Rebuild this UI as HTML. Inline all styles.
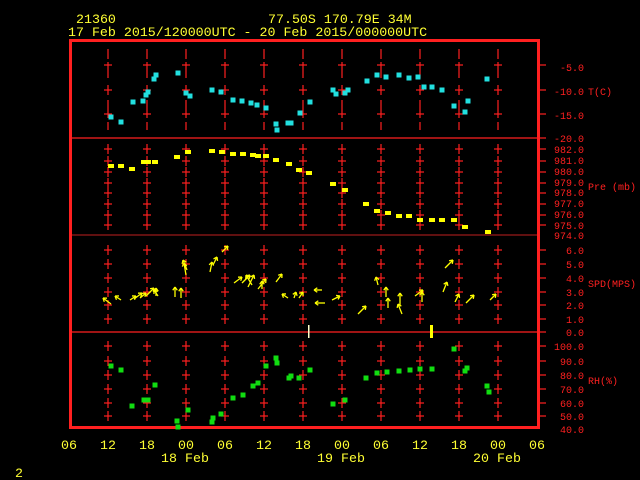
<!DOCTYPE html>
<html><head><meta charset="utf-8"><style>
html,body{margin:0;padding:0;background:#000;width:640px;height:480px;overflow:hidden}
svg{display:block}
text{font-family:"Liberation Mono",monospace}
</style></head><body>
<svg id="s" width="640" height="480" xmlns="http://www.w3.org/2000/svg">
<g fill="#ffff33" font-size="13.3">
<text x="76" y="23">21360</text>
<text x="268" y="23">77.50S  170.79E   34M</text>
<text x="68" y="36">17 Feb 2015/120000UTC - 20 Feb 2015/000000UTC</text>
<text x="185" y="462" text-anchor="middle">18 Feb</text>
<text x="341" y="462" text-anchor="middle">19 Feb</text>
<text x="497" y="462" text-anchor="middle">20 Feb</text>
<text x="15" y="477">2</text>
</g>
<g fill="#ffff33" font-size="13.3" text-anchor="middle">
<text x="69" y="449">06</text><text x="108" y="449">12</text><text x="147" y="449">18</text><text x="186" y="449">00</text><text x="225" y="449">06</text><text x="264" y="449">12</text><text x="303" y="449">18</text><text x="342" y="449">00</text><text x="381" y="449">06</text><text x="420" y="449">12</text><text x="459" y="449">18</text><text x="498" y="449">00</text><text x="537" y="449">06</text>
</g>
<g fill="#ff2020" font-size="10" text-anchor="end">
<text x="584" y="71">-5.0</text><text x="584" y="95">-10.0</text><text x="584" y="119">-15.0</text><text x="584" y="142">-20.0</text>
<text x="584" y="153">982.0</text><text x="584" y="164">981.0</text><text x="584" y="175">980.0</text><text x="584" y="186">979.0</text><text x="584" y="196">978.0</text><text x="584" y="207">977.0</text><text x="584" y="218">976.0</text><text x="584" y="229">975.0</text><text x="584" y="239">974.0</text>
<text x="584" y="254">6.0</text><text x="584" y="268">5.0</text><text x="584" y="282">4.0</text><text x="584" y="296">3.0</text><text x="584" y="309">2.0</text><text x="584" y="323">1.0</text><text x="584" y="336">0.0</text>
<text x="584" y="350">100.0</text><text x="584" y="365">90.0</text><text x="584" y="379">80.0</text><text x="584" y="393">70.0</text><text x="584" y="407">60.0</text><text x="584" y="420">50.0</text><text x="584" y="433">40.0</text>
</g>
<g fill="#ff2020" font-size="10">
<text x="588" y="95">T(C)</text><text x="588" y="190">Pre (mb)</text><text x="588" y="287">SPD(MPS)</text><text x="588" y="384">RH(%)</text>
</g>
<g id="g"></g>
</svg>
<script>
var g=document.getElementById('g'),h='';
function L(a,b,c,d,col,w){h+='<line x1="'+a+'" y1="'+b+'" x2="'+c+'" y2="'+d+'" stroke="'+(col||'#ff2020')+'" stroke-width="'+(w||1.2)+'"/>';}
var xs=[108,147,186,225,264,303,342,381,420,459,498];
var Tseg=[[49,59],[62,78],[85,95],[100,118],[122,130]],Tc=[65,90,114];
var P=[149,161,172,183,193,204,215,225],S=[250,264,278,292,305,319],R=[346,361,375,389,403,416];
var all=[].concat(P,S,R);
xs.forEach(function(x){
 Tseg.forEach(function(s){L(x,s[0],x,s[1]);});
 Tc.forEach(function(y){L(x-4,y,x+4,y);});
 all.forEach(function(y){L(x,y-5,x,y+5);L(x-4,y,x+4,y);});
});
Tc.concat([138],all,[332]).forEach(function(y){L(539,y,546,y);});
L(70,138,539,138);L(70,235,539,235,'#c02020',1);L(70,332,539,332);
h+='<rect x="70.5" y="40.5" width="468" height="387" fill="none" stroke="#ff2020" stroke-width="3"/>';
function pts(a,c,w,hh){a.forEach(function(p){h+='<rect x="'+(p[0]-w/2)+'" y="'+(p[1]-hh/2)+'" width="'+w+'" height="'+hh+'" fill="'+c+'"/>';});}
pts([[111,117],[121,122],[133,102],[143,101],[146,95],[148,92],[154,79],[156,75],[178,73],[186,93],[190,96],[212,90],[221,92],[233,100],[242,101],[251,103],[257,105],[266,108],[276,124],[277,130],[288,123],[291,123],[300,113],[310,102],[333,90],[336,94],[345,93],[348,90],[367,81],[377,75],[386,77],[399,75],[409,78],[418,77],[424,87],[432,87],[442,90],[454,106],[465,112],[468,101],[487,79]],'#22e0e0',5,5);
pts([[111,166],[121,166],[132,169],[144,162],[148,162],[155,162],[177,157],[188,152],[212,151],[222,152],[233,154],[243,154],[253,155],[258,156],[266,156],[276,160],[289,164],[299,170],[309,173],[333,184],[345,190],[366,204],[377,211],[388,213],[399,216],[409,216],[420,220],[432,220],[442,220],[454,220],[465,227],[488,232]],'#ffff00',6,4);
pts([[111,366],[121,370],[132,406],[144,400],[148,400],[155,385],[177,421],[178,427],[188,410],[212,422],[213,418],[221,414],[233,398],[243,395],[253,386],[258,383],[266,366],[276,358],[277,363],[289,378],[291,376],[299,378],[310,370],[333,404],[345,400],[366,378],[377,373],[387,372],[399,371],[410,370],[420,369],[432,369],[454,349],[465,371],[467,368],[487,386],[489,392]],'#11dd11',5,5);
var W=[[111,304,-8,-6],[121,300,-6,-4],[130,300,6,-4],[134,299,8,-6],[140,298,6,-5],[146,296,8,-8],[156,296,0,-8],[158,296,-4,-6],[175,297,0,-10],[181,298,0,-10],[187,270,-4,-10],[186,275,-2,-12],[210,272,2,-10],[213,265,4,-8],[222,252,6,-6],[234,283,8,-6],[242,283,8,-8],[248,287,6,-12],[252,285,-6,-10],[258,289,8,-10],[262,289,0,-8],[276,282,6,-8],[288,298,-6,-4],[294,298,2,-6],[299,298,4,-6],[322,290,-8,0],[325,303,-10,0],[332,300,8,-4],[358,314,8,-8],[378,285,-2,-8],[386,297,0,-10],[388,308,0,-10],[400,305,0,-12],[402,314,-4,-10],[415,296,8,-6],[422,302,0,-10],[443,292,4,-10],[445,268,8,-8],[455,302,4,-8],[466,303,8,-8],[490,300,6,-6]];
W.forEach(function(w){var x2=w[0]+w[2],y2=w[1]+w[3];L(w[0],w[1],x2,y2,'#ffff00',1.3);var a=Math.atan2(w[3],w[2]);L(x2,y2,x2-4*Math.cos(a-0.6),y2-4*Math.sin(a-0.6),'#ffff00',1.3);L(x2,y2,x2-4*Math.cos(a+0.6),y2-4*Math.sin(a+0.6),'#ffff00',1.3);});
h+='<rect x="308" y="325" width="1.5" height="13" fill="#ffffcc"/><rect x="430" y="325" width="3" height="13" fill="#ffff00"/>';
g.innerHTML=h;
</script>
</body></html>
